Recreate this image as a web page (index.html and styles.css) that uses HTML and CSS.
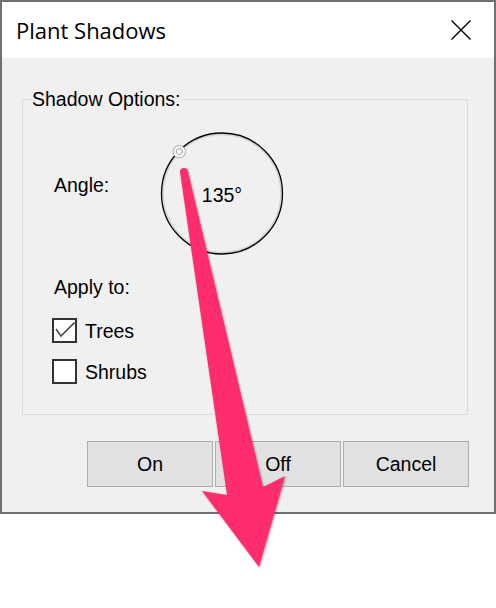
FILE: index.html
```html
<!DOCTYPE html>
<html>
<head>
<meta charset="utf-8">
<link rel="stylesheet" href="styles.css">
</head>
<body>
<div class="window">
  <div class="titlebar">
    <span class="title">Plant Shadows</span>
    <svg class="close" width="20" height="20" viewBox="0 0 20 20"><path d="M0.5 0.5 L19.5 19.5 M19.5 0.5 L0.5 19.5" stroke="#000" stroke-width="1.4" fill="none"/></svg>
  </div>
  <div class="content">
    <div class="group">
      <div class="legend">Shadow Options:</div>
      <div class="angle-row">
        <div class="angle-label">Angle:</div>
        <svg class="dial" width="128" height="128" viewBox="0 0 128 128">
          <circle cx="64" cy="63.5" r="59" fill="none" stroke="#d2d2d2" stroke-width="1.6"/>
          <circle cx="64" cy="63.5" r="60.5" fill="none" stroke="#000" stroke-width="1.3"/>
          <text x="64" y="71.7" text-anchor="middle" class="dial-text">135°</text>
          <circle cx="21.3" cy="21.7" r="6.2" fill="#f7f7f7" stroke="#a8a8a8" stroke-width="1"/>
          <circle cx="21.3" cy="21.7" r="3" fill="none" stroke="#333" stroke-width="0.9" stroke-dasharray="1 1.1"/>
        </svg>
      </div>
      <div class="apply">Apply to:</div>
      <div class="check-row first">
        <span class="box"><svg width="21" height="21" viewBox="0 0 21 21"><polyline points="2,9 7,16 20.5,2.5" fill="none" stroke="#4a4a4a" stroke-width="1.6"/></svg></span>
        <span class="check-label">Trees</span>
      </div>
      <div class="check-row">
        <span class="box"></span>
        <span class="check-label">Shrubs</span>
      </div>
    </div>
    <div class="buttons">
      <div class="btn">On</div>
      <div class="btn">Off</div>
      <div class="btn">Cancel</div>
    </div>
  </div>
</div>
<svg class="arrow" width="496" height="608" viewBox="0 0 496 608">
  <path d="M180 172 A4 4 0 0 1 188 172 L263 487 L285 476 L259 567 L202 491 L227 495 Z" fill="#ff2d6d"/>
</svg>
</body>
</html>
```

FILE: styles.css
```css
html, body {
  margin: 0;
  padding: 0;
  background: #ffffff;
}
body {
  width: 496px;
  height: 608px;
  position: relative;
  overflow: hidden;
  font-family: "Liberation Sans", Arial, sans-serif;
  font-size: 19.5px;
  color: #000;
}
.window {
  width: 496px;
  height: 514px;
  box-sizing: border-box;
  border: 2px solid #707070;
  display: flex;
  flex-direction: column;
}
.titlebar {
  height: 56px;
  background: #fff;
  display: flex;
  align-items: center;
  justify-content: space-between;
  padding-left: 14px;
  padding-right: 23px;
  flex: none;
}
.title {
  font-family: "Open Sans", "Noto Sans", sans-serif;
  font-size: 22px;
  line-height: 30px;
  color: #000;
}
.close {
  display: block;
  margin-top: -1px;
}
.content {
  flex: 1;
  background: #f0f0f0;
  display: flex;
  flex-direction: column;
}
.group {
  margin: 41px 26px 0 20px;
  border: 1px solid #dcdcdc;
  height: 314px;
}
.legend {
  width: max-content;
  margin: -12px 0 0 9px;
  line-height: 22px;
  background: #f0f0f0;
  padding-right: 1px;
}
.angle-row {
  display: flex;
  align-items: flex-start;
  margin-top: 20px;
}
.angle-label {
  width: 135px;
  flex: none;
  box-sizing: border-box;
  padding-left: 31px;
  margin-top: 44px;
  line-height: 22px;
}
.dial {
  display: block;
  flex: none;
}
.dial-text {
  font-family: "Liberation Sans", Arial, sans-serif;
  font-size: 19.5px;
  fill: #000;
}
.apply {
  margin: 18px 0 0 31px;
  line-height: 22px;
}
.check-row {
  display: flex;
  align-items: center;
  margin: 16px 0 0 29px;
}
.check-row.first {
  margin-top: 20px;
}
.box {
  width: 25px;
  height: 25px;
  box-sizing: border-box;
  border: 2px solid #333;
  background: #fff;
  display: block;
  flex: none;
}
.box svg {
  display: block;
}
.check-label {
  margin-left: 8px;
  line-height: 22px;
}
.buttons {
  display: flex;
  justify-content: flex-end;
  gap: 2px;
  margin-top: 26px;
  padding-right: 25px;
}
.btn {
  width: 126px;
  height: 46px;
  box-sizing: border-box;
  border: 1px solid #adadad;
  background: #e1e1e1;
  display: flex;
  align-items: center;
  justify-content: center;
  line-height: 22px;
}
.arrow {
  position: absolute;
  left: 0;
  top: 0;
  pointer-events: none;
  filter: drop-shadow(1px 1px 1.2px rgba(0, 0, 0, 0.35));
}
```
